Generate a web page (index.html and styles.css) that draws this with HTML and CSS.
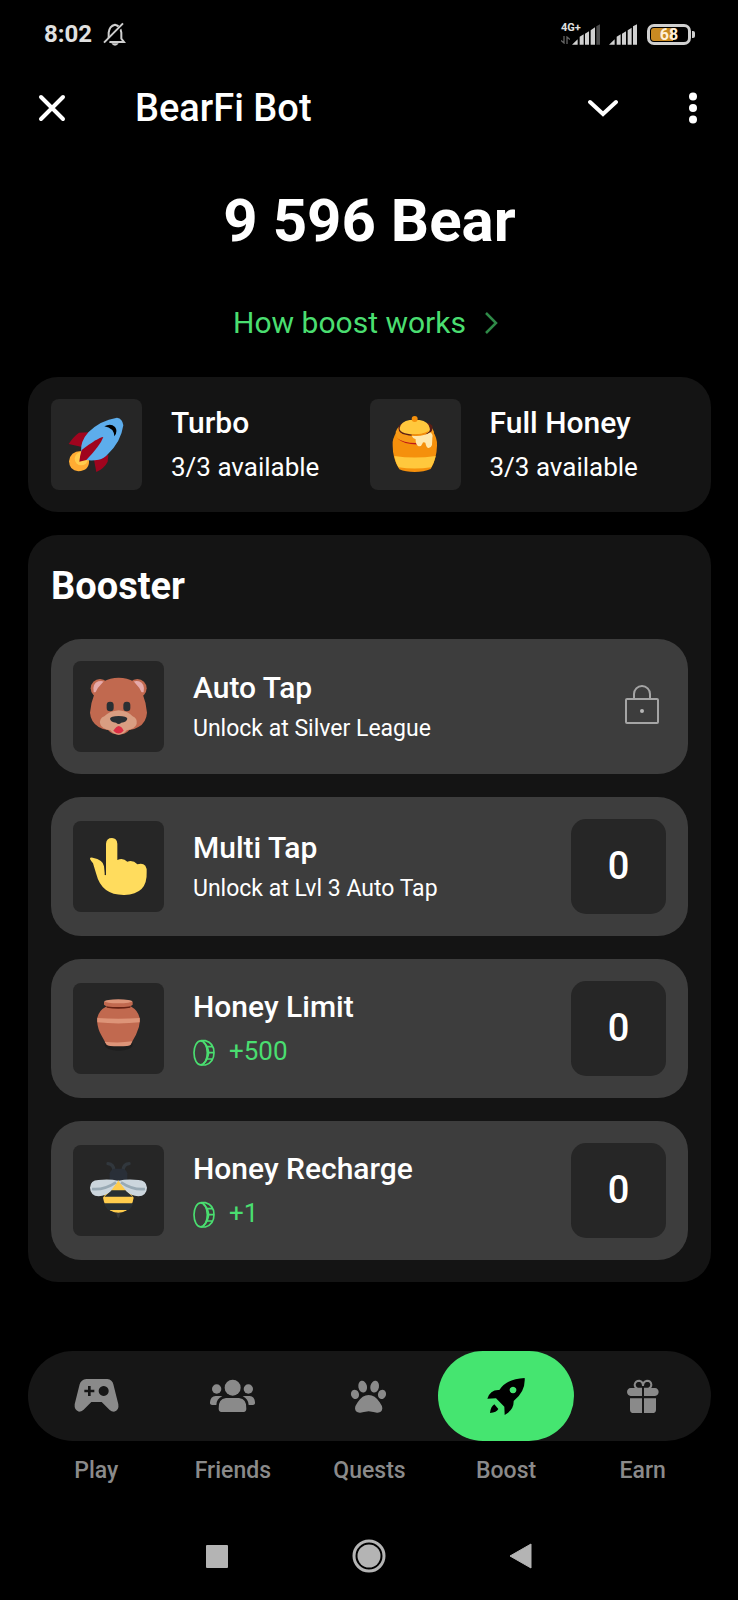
FILE: index.html
```html
<!DOCTYPE html>
<html lang="en">
<head>
<meta charset="utf-8">
<meta name="viewport" content="width=device-width, initial-scale=1">
<title>BearFi Bot</title>
<link rel="stylesheet" href="styles.css">
</head>
<body>
<div class="status">
  <span class="status-time">8:02</span>
  <svg class="status-bell" viewBox="309 66 69 72" aria-hidden="true">
    <path d="M326 124V98q2-20 19-24 17 4 19 24v18l8 10H328" fill="none" stroke="#cfcfcf" stroke-width="6"/>
    <path d="M334 130h22q-4 7-11 7t-11-7z" fill="#cfcfcf"/>
    <path d="M315 131L371 70" stroke="#000" stroke-width="10"/>
    <path d="M312 128L369 70" stroke="#cfcfcf" stroke-width="6"/>
  </svg>
  <div class="status-right">
    <div class="network">
      <span class="network-type">4G+</span>
      <svg class="network-arrows" viewBox="0 0 9 8" aria-hidden="true"><path d="M3 0v7L0 4.500M6 8V1l3 2.500" fill="none" stroke="#666" stroke-width="1.300"/></svg>
    </div>
    <svg class="signal" viewBox="609 68 84 63" aria-hidden="true">
      <path d="M609 130l17-16v16zM632 106l12-7v31h-12zM648 97l12-7v40h-12zM665 87l13-9v52h-13z" fill="#d0d0d0"/>
      <path d="M682 75l11-6v61h-11z" fill="#4c4c4c"/>
    </svg>
    <svg class="signal signal-second" viewBox="720 68 84 63" aria-hidden="true">
      <path d="M720 130l17-16v16zM743 106l12-7v31h-12zM759 97l12-7v40h-12zM776 87l12-8v51h-12zM792 75l12-6v61h-12z" fill="#d0d0d0"/>
    </svg>
    <div class="battery"><span class="battery-level">68</span></div>
  </div>
</div>

<header class="topbar">
  <button class="icon-button" aria-label="Close"><svg class="icon-close" viewBox="0 0 28 28"><path d="M3 3l22 22M25 3L3 25" fill="none" stroke="#fff" stroke-width="4" stroke-linecap="round"/></svg></button>
  <h1 class="topbar-title">BearFi Bot</h1>
  <button class="icon-button" aria-label="Minimise"><svg class="icon-down" viewBox="0 0 30 18"><path d="M2 3l13 12L28 3" fill="none" stroke="#fff" stroke-width="4" stroke-linecap="round"/></svg></button>
  <button class="icon-button" aria-label="More"><svg class="icon-more" viewBox="0 0 8 32"><g fill="#fff"><circle cx="4" cy="4.500" r="4"/><circle cx="4" cy="16" r="4"/><circle cx="4" cy="27.500" r="4"/></g></svg></button>
</header>

<main class="content">
  <p class="balance">9 596 Bear</p>
  <a class="how-link" href="#how">How boost works
    <svg class="how-chevron" viewBox="0 0 14 22" aria-hidden="true"><path d="M2 1l10 10L2 21" fill="none" stroke="#2f8a48" stroke-width="2.500"/></svg>
  </a>

  <section class="panel daily">
    <button class="boost">
      <span class="tile"><svg class="tile-art" viewBox="92 87 273 273" aria-hidden="true">
        <path d="M204 187l-28 1q-17 12-31 34l40 9zM264 255l-2 20q-10 20-34 31l-8-42z" fill="#a0041e"/>
        <path d="M206 270q2 32-32 34-27-2-28-30 3-30 36-31z" fill="#ffac33"/>
        <circle cx="183" cy="266" r="20" fill="#ffcc4d"/>
        <path d="M182 245q-2-31 22-58 35-36 86-44 17 3 19 23-7 49-46 86-12 14-28 17-20 4-38 1-13-6-15-25z" fill="#5dadec"/>
        <path d="M252 169q19-11 32 2 10 13-2 28-1-25-30-30z" fill="#000"/>
        <path d="M249 201q-9 25-51 69l-21 5q2-19 7-35 48-37 65-39z" fill="#a0041e"/>
      </svg></span>
      <span class="boost-text"><span class="boost-title">Turbo</span><span class="boost-value">3/3 available</span></span>
    </button>
    <button class="boost">
      <span class="tile"><svg class="tile-art" viewBox="29 87 273 273" aria-hidden="true">
        <path d="M110 183q-16 26-13 44 0 40 20 71 18 8 46 8t48-9q18-30 19-70 2-21-13-44z" fill="#f5900c"/>
        <path d="M102 258q61 9 124 0-4 19-13 34-50 7-99 0-9-15-12-34z" fill="#ffc83d"/>
        <path d="M106 186q5-18 28-27h58q23 8 29 27-1 19-18 28-35 12-74 1-24-10-23-29z" fill="#f79a17"/>
        <path d="M115 167q-4 17 12 25 37 12 76 0 17-8 13-25l-10-8h-80z" fill="#5a1e14"/>
        <path d="M118 174q4-20 30-24h30q26 4 30 24 4 12-12 16-31 8-62 0-18-6-16-16z" fill="#ffc83d"/>
        <path d="M154 192q29 3 52-10-9 14-25 17l-27 2z" fill="#f5900c"/>
        <path d="M110 205q20 14 55 14l20-1v5q-50 4-75-18z" fill="#be1919"/>
        <path d="M154 197q31 5 56-10 9 7 6 16l-1 22q-3 9-10 9t-10-16q-7-4-9 3-4 11-13 7-8-6-7-20-8-2-12-11z" fill="#ffe8ad"/>
        <circle cx="163" cy="147" r="9" fill="#f5900c"/>
      </svg></span>
      <span class="boost-text"><span class="boost-title">Full Honey</span><span class="boost-value">3/3 available</span></span>
    </button>
  </section>

  <section class="panel booster">
    <h2 class="booster-heading">Booster</h2>
    <button class="boost boost-row">
      <span class="tile"><svg class="tile-art" viewBox="159 393 273 273" aria-hidden="true">
        <g fill="#c1694f"><circle cx="240" cy="475" r="28"/><circle cx="352" cy="475" r="28"/></g>
        <path d="M221 487q-5-26 14-33 13-4 21 4l-24 29zM371 487q5-26-14-33-13-4-21 4l24 29z" fill="#e6aaaa"/>
        <path d="M250 455q20-12 46-12t46 12q34 32 39 93-2 30-26 43-12 8-27 9-12 14-32 14t-32-14q-16-1-28-9-24-15-26-43 5-61 40-93z" fill="#c1694f"/>
        <path d="M296 541q-28 2-43 18-17 7-12 24 4 14 30 18 11 13 25 13t24-13q24-3 30-19 3-16-12-23-14-16-42-18z" fill="#d99e82"/>
        <path d="M280 602q9-13 16-14 9 1 15 14-15 17-31 0z" fill="#dd2e44"/>
        <g fill="#292f33"><rect x="260" y="515" width="21" height="29" rx="10"/><rect x="310" y="515" width="21" height="29" rx="10"/><path d="M270 566q2-8 26-8t26 8q-2 10-18 12-8 8-16 0-16-2-18-12z"/></g>
      </svg></span>
      <span class="boost-text"><span class="boost-title">Auto Tap</span><span class="boost-note">Unlock at Silver League</span></span>
      <svg class="lock" viewBox="0 0 36 40" aria-label="Locked"><g fill="none" stroke="#a5a5a5" stroke-width="2"><rect x="2" y="14" width="32" height="24" rx="1"/><path d="M10 14V9a8 8 0 0 1 16 0v5"/></g><circle cx="18" cy="26" r="2" fill="#b5b5b5"/></svg>
    </button>
    <button class="boost boost-row">
      <span class="tile"><svg class="tile-art" viewBox="99 93 273 273" aria-hidden="true">
        <path d="M198 255V161q1-17 18-17 15 1 16 17v49q17-8 30 5 17-6 30 8 16-5 24 4 5 7 4 20 3 66-67 68-68 1-84-62l-10-33q-6-7-9-13-1-5 8-4 32 6 34 26l4 27z" fill="#ffdc5d"/>
        <path d="M196 222v33" stroke="#262626" stroke-width="4"/>
      </svg></span>
      <span class="boost-text"><span class="boost-title">Multi Tap</span><span class="boost-note">Unlock at Lvl 3 Auto Tap</span></span>
      <span class="level">0</span>
    </button>
    <button class="boost boost-row">
      <span class="tile"><svg class="tile-art" viewBox="99 98 273 273" aria-hidden="true">
        <ellipse cx="236" cy="283" rx="42" ry="18" fill="#1e1e1e"/>
        <path d="M200 168q-28 15-29 42 2 27 13 45l15 27q6 5 37 5t36-5l16-29q11-21 12-43-2-27-28-42z" fill="#c1694f"/>
        <path d="M172 203q64 5 127 0v13q-64 7-127 0zM194 274q42 5 83-1l-5 10q-4 5-36 5t-36-5z" fill="#dd9478"/>
        <path d="M200 168h71v4q-36 6-71 0z" fill="#662113"/>
        <path d="M192 154q44-7 86 0v9q-4 7-43 7t-43-7z" fill="#c1694f"/>
        <ellipse cx="235" cy="153" rx="42" ry="6" fill="#dd9478"/>
      </svg></span>
      <span class="boost-text"><span class="boost-title">Honey Limit</span><span class="boost-value boost-gain">
        <svg class="coin" viewBox="461 268 66 81" aria-hidden="true"><g fill="none" stroke="#4ade70" stroke-width="5"><ellipse cx="484" cy="309.500" rx="20" ry="36"/><path d="M484 273h14q26 7 26 36t-26 37h-14M492 277q13 10 16 32-3 23-16 33M500 291h19M507 309h17M500 328h19"/></g></svg>
        +500</span></span>
      <span class="level">0</span>
    </button>
    <button class="boost boost-row">
      <span class="tile"><svg class="tile-art" viewBox="99 584 273 273" aria-hidden="true">
        <path d="M204 640q18 2 18 22M267 640q-18 2-18 22" fill="none" stroke="#31373d" stroke-width="10" stroke-linecap="round"/>
        <path d="M209 690v-21q4-14 17-14h20q14 2 16 14v21z" fill="#292f38"/>
        <path d="M235 690q25 20 46 52-4 26-21 38-12 8-25 8t-25-8q-17-14-21-38 20-32 46-52z" fill="#ffcc4d"/>
        <path d="M214 720h43l21 19h-85zM192 759h88q-3 11-13 20h-62q-10-9-13-20z" fill="#292f33"/>
        <path d="M228 787h14l-5 15h-4z" fill="#383838"/>
        <path d="M235 691q-28-6-60-2-24 1-25 23 1 24 26 26 22-2 36-15zM235 691q28-6 60-2 24 1 26 23-1 24-26 26-22-2-36-15z" fill="#ccd6dd"/>
        <path d="M228 696q-36 24-72 20M243 696q36 24 72 20" fill="none" stroke="#99aab5" stroke-width="8"/>
      </svg></span>
      <span class="boost-text"><span class="boost-title">Honey Recharge</span><span class="boost-value boost-gain">
        <svg class="coin" viewBox="461 268 66 81" aria-hidden="true"><g fill="none" stroke="#4ade70" stroke-width="5"><ellipse cx="484" cy="309.500" rx="20" ry="36"/><path d="M484 273h14q26 7 26 36t-26 37h-14M492 277q13 10 16 32-3 23-16 33M500 291h19M507 309h17M500 328h19"/></g></svg>
        +1</span></span>
      <span class="level">0</span>
    </button>
  </section>
</main>

<nav class="tabs">
  <a class="tab" href="#play"><span class="tab-slot"><span class="tab-pill"><svg class="tab-icon" viewBox="157 96 144 144" aria-hidden="true">
    <path fill-rule="evenodd" d="M200 117h63q15 2 18 16l15 60q3 19-13 22-8 0-13-5l-24-24h-31l-24 24q-6 5-13 5-15-4-13-22l15-60q4-14 20-16zM205 138v11h-11v8h11v11h8v-11h11v-8h-11v-11zM252 138a15 15 0 1 0 .1 0z" fill="#8a8a8a"/></svg></span></span><span class="tab-label">Play</span></a>
  <a class="tab" href="#friends"><span class="tab-slot"><span class="tab-pill"><svg class="tab-icon" viewBox="567 96 144 144" aria-hidden="true">
    <g fill="#8a8a8a"><circle cx="638" cy="143" r="24"/><circle cx="590" cy="147" r="14"/><circle cx="685" cy="147" r="14"/><path d="M596 206q-2-29 22-32h39q24 3 22 32 0 9-8 10h-67q-8-1-8-10zM607 169q-18 8-18 26h-12q-8 0-7-8 1-18 17-19h13q5 0 7 1zM668 169q17 8 18 26h12q8 0 7-8-1-18-16-19h-14q-5 0-7 1z"/></g></svg></span></span><span class="tab-label">Friends</span></a>
  <a class="tab" href="#quests"><span class="tab-slot"><span class="tab-pill"><svg class="tab-icon" viewBox="-73 96 144 144" aria-hidden="true">
    <g fill="#8a8a8a"><ellipse cx="-20" cy="140" rx="13" ry="18" transform="rotate(-12 -20 140)"/><ellipse cx="16" cy="140" rx="13" ry="18" transform="rotate(12 16 140)"/><ellipse cx="-43" cy="163" rx="12" ry="14" transform="rotate(-20 -43 163)"/><ellipse cx="38" cy="163" rx="12" ry="14" transform="rotate(20 38 163)"/><path d="M-2 165q19 0 33 22 8 11 8 18-1 14-16 13-9-2-25-4-16 2-25 4-15 1-16-13 0-7 8-18 14-22 33-22z"/></g></svg></span></span><span class="tab-label">Quests</span></a>
  <a class="tab" href="#boost" aria-current="page"><span class="tab-slot"><span class="tab-pill tab-pill-active"><svg class="tab-icon" viewBox="336 96 144 144" aria-hidden="true">
    <path fill-rule="evenodd" d="M464 114q3 41-33 69 1 27-27 42l-1-25-25-25-26 1q9-28 36-26 22-34 76-36zM429 140a10 10 0 1 0 .1 0zM373 193l12 14q-5 10-25 12 2-19 13-26z" fill="#000"/></svg></span></span><span class="tab-label">Boost</span></a>
  <a class="tab" href="#earn"><span class="tab-slot"><span class="tab-pill"><svg class="tab-icon" viewBox="744 96 144 144" aria-hidden="true">
    <g fill="none" stroke="#8a8a8a" stroke-width="6"><path d="M813 146h-14q-8-4-8-12 2-12 14-12 11 2 11 16 0-14 12-16 12 0 13 12 0 8-8 12h-14"/></g>
    <path d="M779 144h34v24h-34q-10-1-11-12 1-11 11-12zM819 144h33q10 1 11 12-1 11-11 12h-33zM777 175h36v44h-25q-11 0-11-10zM819 175h36v34q0 10-11 10h-25z" fill="#8a8a8a"/></svg></span></span><span class="tab-label">Earn</span></a>
</nav>

<div class="system-nav">
  <button class="system-button" aria-label="Recent apps"><svg class="system-icon" viewBox="0 0 34 34"><rect x="6" y="6" width="22" height="23" rx="1" fill="#b4b4b4"/></svg></button>
  <button class="system-button" aria-label="Home"><svg class="system-icon" viewBox="0 0 34 34"><circle cx="17" cy="17" r="15" fill="none" stroke="#b4b4b4" stroke-width="3"/><circle cx="17" cy="17" r="11.500" fill="#b4b4b4"/></svg></button>
  <button class="system-button" aria-label="Back"><svg class="system-icon" viewBox="0 0 34 34"><path d="M6 17L27 5v24z" fill="#b4b4b4" stroke="#b4b4b4" stroke-linejoin="round"/></svg></button>
</div>
</body>
</html>
```

FILE: styles.css
```css
* { box-sizing: border-box; }
body {
  margin: 0;
  background: #000;
  color: #fff;
  font-family: Roboto, "Liberation Sans", sans-serif;
}
svg { display: block; flex: none; }
button {
  margin: 0;
  padding: 0;
  border: 0;
  background: none;
  color: inherit;
  font: inherit;
  text-align: left;
  cursor: pointer;
}
a { color: inherit; text-decoration: none; }
h1, h2, p { margin: 0; }

/* Status bar */
.status {
  display: flex;
  align-items: center;
  height: 68px;
  padding: 0 47px 0 44px;
  color: #e0e0e0;
}
.status-time { font-size: 24px; font-weight: 700; line-height: 28px; }
.status-bell { width: 23px; height: 24px; margin-left: 11px; }
.status-right { display: flex; align-items: center; margin-left: auto; }
.network { width: 20px; height: 20px; margin-right: -9px; }
.network-type { display: block; font-size: 11px; font-weight: 700; line-height: 8px; }
.network-arrows { width: 9px; height: 8px; margin-top: 4px; }
.signal { width: 28px; height: 21px; }
.signal-second { margin: 0 10px 0 9px; }
.battery {
  position: relative;
  width: 44px;
  height: 21px;
  border: 3px solid #d0d0d0;
  border-radius: 7px;
  background: linear-gradient(90deg, #c98a22 60%, #000 60%) content-box;
  padding: 1px;
}
.battery::after {
  content: "";
  position: absolute;
  top: 4px;
  right: -7px;
  width: 3px;
  height: 7px;
  border-radius: 0 2px 2px 0;
  background: #d0d0d0;
}
.battery-level {
  display: block;
  color: #fff0d8;
  font-size: 16px;
  font-weight: 700;
  line-height: 13px;
  text-align: center;
}

/* Title bar */
.topbar {
  display: flex;
  align-items: center;
  height: 80px;
  padding: 0 41px 0 38px;
}
.topbar-title {
  flex: 1;
  margin-left: 69px;
  font-size: 38px;
  font-weight: 500;
  line-height: 44px;
}
.icon-button + .icon-button { margin-left: 71px; }
.icon-close { width: 28px; height: 28px; }
.icon-down { width: 30px; height: 18px; }
.icon-more { width: 8px; height: 32px; }

/* Content */
.content {
  display: flex;
  flex-direction: column;
  padding: 37px 27px 0 28px;
}
.balance {
  font-size: 60px;
  font-weight: 700;
  line-height: 72px;
  text-align: center;
}
.how-link {
  display: flex;
  align-items: center;
  align-self: center;
  gap: 18px;
  margin: 44px 0 32px;
  padding-right: 8px;
  color: #4ade70;
  font-size: 30px;
  line-height: 44px;
}
.how-chevron { width: 14px; height: 22px; }
.panel {
  padding: 22px 23px;
  border-radius: 30px;
  background: #141414;
}
.daily { display: grid; grid-template-columns: 1fr 1fr; }
.boost { display: flex; align-items: center; gap: 29px; }
.tile {
  flex: none;
  width: 91px;
  height: 91px;
  border-radius: 8px;
  background: #262626;
}
.tile-art { width: 91px; height: 91px; }
.boost-text { display: flex; flex: 1; flex-direction: column; }
.boost-title { font-size: 30px; font-weight: 500; line-height: 44px; }
.boost-value { font-size: 26px; line-height: 44px; }
.boost-note { font-size: 23px; line-height: 38px; }
.boost-gain { display: flex; align-items: center; gap: 14px; color: #4ade70; }
.coin { width: 22px; height: 27px; margin-top: 3px; }

.booster {
  display: flex;
  flex-direction: column;
  gap: 23px;
  margin-top: 23px;
}
.booster-heading { font-size: 38px; font-weight: 700; line-height: 59px; }
.boost-row {
  padding: 22px;
  border-radius: 30px;
  background: #3d3d3d;
}
.lock { width: 36px; height: 40px; margin: 0 6px 4px 0; }
.level {
  width: 95px;
  height: 95px;
  border-radius: 15px;
  background: #262626;
  font-size: 38px;
  font-weight: 500;
  line-height: 95px;
  text-align: center;
}

/* Bottom tabs */
.tabs {
  display: grid;
  grid-template-columns: repeat(5, 1fr);
  margin: 69px 27px 0 28px;
}
.tab { text-align: center; }
.tab-slot { display: block; background: #161616; }
.tab:first-child .tab-slot { border-radius: 45px 0 0 45px; }
.tab:last-child .tab-slot { border-radius: 0 45px 45px 0; }
.tab-pill {
  display: flex;
  align-items: center;
  justify-content: center;
  height: 90px;
  border-radius: 45px;
}
.tab-pill-active { background: #45e570; }
.tab-icon { width: 48px; height: 48px; }
.tab-label {
  display: block;
  margin-top: 15px;
  color: #8a8a8a;
  font-size: 23px;
  font-weight: 500;
  line-height: 30px;
}

/* System buttons */
.system-nav {
  display: flex;
  justify-content: center;
  gap: 118px;
  padding: 53px 0 27px;
}
.system-icon { width: 34px; height: 34px; }
```
